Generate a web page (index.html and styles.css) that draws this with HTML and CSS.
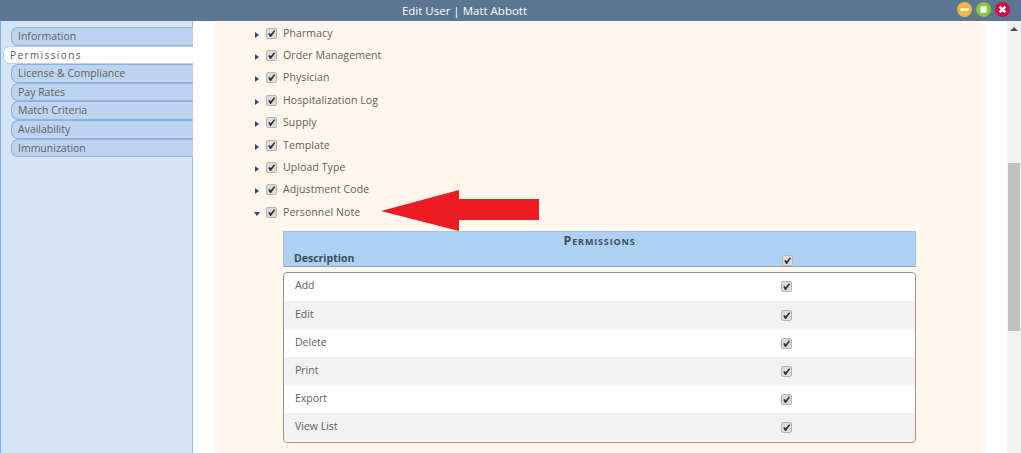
FILE: index.html
```html
<!DOCTYPE html>
<html lang="en">
<head>
<meta charset="utf-8">
<title>Edit User | Matt Abbott</title>
<link rel="stylesheet" href="styles.css">
</head>
<body>
<svg class="defs" width="0" height="0" aria-hidden="true">
  <symbol id="tick" viewBox="0 0 11 11"><path d="M2.2 5.8 L3.7 5 L4.7 6.3 L8 2.2 L9.2 3 L5 9 L4 9 Z" fill="#333"/></symbol>
</svg>
<header class="titlebar">
  <div class="title">Edit User | Matt Abbott</div>
  <div class="controls">
    <span class="ctl ctl-min"><svg viewBox="0 0 15 15"><rect x="3.5" y="6.2" width="8" height="2.6" fill="#fff" opacity=".9"/></svg></span>
    <span class="ctl ctl-max"><svg viewBox="0 0 15 15"><rect x="4.3" y="4.3" width="6.4" height="6.4" fill="#fff" opacity=".9"/></svg></span>
    <span class="ctl ctl-close"><svg viewBox="0 0 15 15"><path d="M4.6 4.6 L10.4 10.4 M10.4 4.6 L4.6 10.4" stroke="#fff" stroke-width="2.6"/></svg></span>
  </div>
</header>
<div class="body">
  <nav class="sidebar">
    <a class="tab">Information</a>
    <a class="tab active">Permissions</a>
    <a class="tab">License &amp; Compliance</a>
    <a class="tab">Pay Rates</a>
    <a class="tab">Match Criteria</a>
    <a class="tab">Availability</a>
    <a class="tab">Immunization</a>
  </nav>
  <main class="main">
    <section class="panel">
      <ul class="tree">
        <li class="node"><span class="twist"><i class="caret"></i></span><span class="cb"><svg><use href="#tick"/></svg></span><span>Pharmacy</span></li>
        <li class="node"><span class="twist"><i class="caret"></i></span><span class="cb"><svg><use href="#tick"/></svg></span><span>Order Management</span></li>
        <li class="node"><span class="twist"><i class="caret"></i></span><span class="cb"><svg><use href="#tick"/></svg></span><span>Physician</span></li>
        <li class="node"><span class="twist"><i class="caret"></i></span><span class="cb"><svg><use href="#tick"/></svg></span><span>Hospitalization Log</span></li>
        <li class="node"><span class="twist"><i class="caret"></i></span><span class="cb"><svg><use href="#tick"/></svg></span><span>Supply</span></li>
        <li class="node"><span class="twist"><i class="caret"></i></span><span class="cb"><svg><use href="#tick"/></svg></span><span>Template</span></li>
        <li class="node"><span class="twist"><i class="caret"></i></span><span class="cb"><svg><use href="#tick"/></svg></span><span>Upload Type</span></li>
        <li class="node"><span class="twist"><i class="caret"></i></span><span class="cb"><svg><use href="#tick"/></svg></span><span>Adjustment Code</span></li>
        <li class="node"><span class="twist"><i class="caret open"></i></span><span class="cb"><svg><use href="#tick"/></svg></span><span>Personnel Note</span></li>
      </ul>
      <div class="perm">
        <div class="perm-head">
          <div class="perm-title">Permissions</div>
          <div class="perm-cols"><span class="desc">Description</span><span class="cb"><svg><use href="#tick"/></svg></span></div>
        </div>
        <div class="perm-rows">
          <div class="row"><span>Add</span><span class="cb"><svg><use href="#tick"/></svg></span></div>
          <div class="row"><span>Edit</span><span class="cb"><svg><use href="#tick"/></svg></span></div>
          <div class="row"><span>Delete</span><span class="cb"><svg><use href="#tick"/></svg></span></div>
          <div class="row"><span>Print</span><span class="cb"><svg><use href="#tick"/></svg></span></div>
          <div class="row"><span>Export</span><span class="cb"><svg><use href="#tick"/></svg></span></div>
          <div class="row"><span>View List</span><span class="cb"><svg><use href="#tick"/></svg></span></div>
        </div>
      </div>
    </section>
    <svg class="arrow" width="160" height="44" viewBox="0 0 160 44"><polygon points="1,22 79,1 79,10 159,10 159,31 79,31 79,42" fill="#ed1c24"/></svg>
  </main>
  <div class="scrollbar">
    <i class="sb-up"></i>
    <div class="sb-thumb"></div>
  </div>
</div>
</body>
</html>
```
FILE: styles.css
```css
* { box-sizing: border-box; }
html, body { margin: 0; height: 100%; overflow: hidden; }
body {
  font-family: "Open Sans", "Liberation Sans", sans-serif;
  font-size: 10.5px;
  color: #606060;
  background: #fff;
  display: flex;
  flex-direction: column;
}
.defs { position: absolute; }

.titlebar {
  flex: 0 0 21px;
  height: 21px;
  background: #5c7591;
  display: flex;
  align-items: center;
  padding-right: 11px;
}
.title {
  flex: 1;
  padding-right: 28px;
  text-align: center;
  color: #fff;
  font-size: 11.5px;
}
.controls { display: flex; gap: 4px; margin-top: -3px; }
.ctl { width: 15px; height: 15px; border-radius: 50%; display: block; }
.ctl svg { display: block; width: 15px; height: 15px; }
.ctl-min { background: #ecb842; }
.ctl-max { background: #8cc43c; }
.ctl-close { background: #d8053f; }

.body { flex: 1; display: flex; min-height: 0; }

.sidebar {
  flex: 0 0 193px;
  background: #d5e5f5;
  border-left: 1px solid #7fb0e0;
  border-right: 1px solid #9fbde2;
  padding: 6px 0 0 10px;
  display: flex;
  flex-direction: column;
}
.tab {
  height: 18.6px;
  line-height: 17px;
  margin-right: -1px;
  padding-left: 6px;
  background: #bdd4f0;
  border: 1px solid #8fb0e2;
  border-right: 0;
  border-radius: 7px 0 0 7px;
  color: #606060;
}
.tab.active {
  margin-left: -8px;
  padding-left: 6px;
  background: #fff;
  border-color: #b9cfea;
  letter-spacing: 1.4px;
  font-size: 10px;
}

.main { flex: 1; position: relative; padding: 0 22px; min-width: 0; }
.panel {
  height: 100%;
  margin-top: 1px;
  background: #fff7ec;
  padding: 0 69px 0 0;
}
.tree { list-style: none; margin: 0; padding: 0 0 0 39px; }
.node {
  height: 22.4px;
  display: flex;
  align-items: center;
  letter-spacing: .1px;
}
.node > span:last-child { margin-top: -1px; }
.twist {
  flex: none;
  width: 12px;
  display: flex;
  margin-top: 3px;
}
.caret {
  width: 0;
  height: 0;
  margin-left: 1px;
  border-left: 4px solid #2c4a86;
  border-top: 3.5px solid transparent;
  border-bottom: 3.5px solid transparent;
}
.caret.open {
  margin-left: 0;
  border-left: 3.5px solid transparent;
  border-right: 3.5px solid transparent;
  border-top: 4px solid #2c4a86;
  border-bottom: 0;
}
.cb {
  flex: none;
  width: 11px;
  height: 11px;
  margin-right: 6px;
  background: #dcdcdc;
  border: 1px solid #b4b4b4;
  border-radius: 2px;
  display: block;
}
.cb svg { display: block; width: 11px; height: 11px; margin: -1px; }

.perm { margin: 7.4px 0 0 68px; }
.perm-head {
  height: 36px;
  background: #aed0f2;
  border: 1px solid #a9c0d8;
  border-bottom-color: #8fa5ba;
  color: #3a4d63;
  font-weight: 700;
}
.perm-title {
  text-align: center;
  font-variant: small-caps;
  font-size: 12.5px;
  letter-spacing: .85px;
  line-height: 18px;
}
.perm-cols {
  display: flex;
  justify-content: space-between;
  align-items: center;
  padding: 0 122px 0 10px;
  height: 15px;
  margin-top: 1px;
}
.perm-cols .cb { margin: 4px 0 0; }
.perm-rows {
  margin-top: 5px;
  height: 171px;
  background: #fff;
  border: 1px solid #97928a;
  border-radius: 4px;
  overflow: hidden;
}
.row {
  height: 28.1px;
  padding: 0 123px 0 11px;
  display: flex;
  justify-content: space-between;
  align-items: center;
}
.row > span:first-child { margin-top: -3px; }
.row:nth-child(even) { background: #f2f2f2; }
.row .cb { margin: 0; }

.arrow { position: absolute; left: 187px; top: 168px; }

.scrollbar {
  flex: 0 0 14px;
  background: #f1f1f1;
  padding: 6px 1px 0;
}
.sb-up {
  display: block;
  width: 0;
  height: 0;
  margin: 0 auto;
  border-left: 4px solid transparent;
  border-right: 4px solid transparent;
  border-bottom: 4px solid #505050;
}
.sb-thumb { margin-top: 132px; height: 168px; background: #c1c1c1; }
```
